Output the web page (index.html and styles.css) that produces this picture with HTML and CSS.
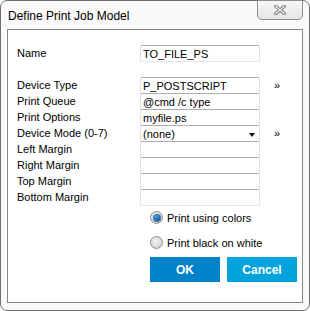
FILE: index.html
```html
<!DOCTYPE html>
<html lang="en">
  <head>
    <meta charset="UTF-8" />
    <title>Define Print Job Model</title>
    <link rel="stylesheet" href="styles.css">
  </head>
  <body>
    <div class="window">
      <div class="titlebar">
        <div class="title">Define Print Job Model</div>
        <button class="close-btn">
          <svg width="12" height="10" viewBox="0 0 12 10">
            <path d="M1.5 1 L10.5 9 M10.5 1 L1.5 9" stroke="#7a7a7a" stroke-width="3.2" stroke-linecap="square" />
            <path d="M1.5 1 L10.5 9 M10.5 1 L1.5 9" stroke="#f4f4f4" stroke-width="1.2" stroke-linecap="square" />
          </svg>
        </button>
      </div>

      <div class="client">
        <div class="row">
          <label class="label">Name</label>
          <input class="field" type="text" value="TO_FILE_PS" />
        </div>

        <div class="group">
          <div class="row">
            <label class="label">Device Type</label>
            <input class="field" type="text" value="P_POSTSCRIPT" />
            <span class="more">&raquo;</span>
          </div>
          <div class="row">
            <label class="label">Print Queue</label>
            <input class="field" type="text" value="@cmd /c type" />
          </div>
          <div class="row">
            <label class="label">Print Options</label>
            <input class="field" type="text" value="myfile.ps" />
          </div>
          <div class="row">
            <label class="label">Device Mode (0-7)</label>
            <div class="field select">
              <span>(none)</span>
              <span class="arrow"></span>
            </div>
            <span class="more">&raquo;</span>
          </div>
          <div class="row">
            <label class="label">Left Margin</label>
            <input class="field" type="text" />
          </div>
          <div class="row">
            <label class="label">Right Margin</label>
            <input class="field" type="text" />
          </div>
          <div class="row">
            <label class="label">Top Margin</label>
            <input class="field" type="text" />
          </div>
          <div class="row">
            <label class="label">Bottom Margin</label>
            <input class="field" type="text" />
          </div>
        </div>

        <div class="options">
          <div class="radio-row">
            <span class="radio checked"></span>
            <span>Print using colors</span>
          </div>
          <div class="radio-row">
            <span class="radio"></span>
            <span>Print black on white</span>
          </div>
        </div>

        <div class="buttons">
          <button class="btn btn-ok">OK</button>
          <button class="btn btn-cancel">Cancel</button>
        </div>
      </div>
    </div>
  </body>
</html>
```

FILE: styles.css
```css
* {
  margin: 0;
  padding: 0;
  box-sizing: border-box;
}

body {
  font-family: "Liberation Sans", Arial, sans-serif;
  font-size: 11px;
  color: #000;
  background: #fff;
}

.window {
  width: 310px;
  height: 311px;
  border: 1px solid #6f6f6f;
  border-radius: 7px;
  background: #f9f9f9;
  padding: 0 6px 7px;
  display: flex;
  flex-direction: column;
}

.titlebar {
  height: 28px;
  display: flex;
  justify-content: space-between;
  align-items: flex-start;
}

.title {
  font-size: 12px;
  line-height: 14px;
  padding: 8px 0 0 1px;
}

.close-btn {
  width: 46px;
  height: 20px;
  margin-top: -1px;
  border: 1px solid #8d8d8d;
  border-radius: 0 0 5px 5px;
  background: linear-gradient(#f7f7f7, #e6e6e6);
  display: flex;
  justify-content: center;
  align-items: center;
}

.client {
  flex: 1;
  border: 1px solid #878787;
  background: #fff;
  padding: 15px 0 0 9px;
}

.group {
  margin-top: 16px;
}

.row {
  height: 16px;
  display: flex;
  align-items: flex-start;
}

.label {
  width: 123px;
  line-height: 16px;
}

.field {
  width: 120px;
  height: 17px;
  border: 1px solid #dde1e7;
  border-top-color: #abadb3;
  border-bottom-color: #e3e9ef;
  border-radius: 2px;
  font-family: inherit;
  font-size: 11px;
  color: #000;
  padding: 0 2px;
  background: #fff;
  position: relative;
}

.select {
  display: flex;
  justify-content: space-between;
  align-items: center;
  padding: 0 3px 0 2px;
}

.arrow {
  width: 0;
  height: 0;
  border-left: 3.5px solid transparent;
  border-right: 3.5px solid transparent;
  border-top: 4px solid #111;
  margin: 2px 1px 0 0;
}

.more {
  margin-left: 14px;
  font-size: 11px;
  line-height: 16px;
}

.options {
  margin: 6px 0 0 133px;
  display: flex;
  flex-direction: column;
  gap: 12px;
}

.radio-row {
  height: 13px;
  display: flex;
  align-items: center;
  gap: 4px;
}

.radio {
  width: 13px;
  height: 13px;
  border-radius: 50%;
  border: 1px solid #8e8f8f;
  background: radial-gradient(circle at 45% 40%, #f4f4f4, #d4d4d4 70%, #bdbdbd);
  display: flex;
  justify-content: center;
  align-items: center;
}

.radio.checked::after {
  content: "";
  width: 6px;
  height: 6px;
  border-radius: 50%;
  background: radial-gradient(circle at 40% 35%, #4aa3e6, #175a98 65%, #0c3764);
  box-shadow: 0 0 0 1px #2e74b0;
}

.buttons {
  margin: 8px 0 0 133px;
  display: flex;
  gap: 7px;
}

.btn {
  width: 70px;
  height: 25px;
  border: none;
  color: #fff;
  font-family: "Liberation Sans", Arial, sans-serif;
  font-size: 12px;
  font-weight: bold;
}

.btn-ok {
  background: #0082c8;
}

.btn-cancel {
  background: #00a3dc;
}
```
